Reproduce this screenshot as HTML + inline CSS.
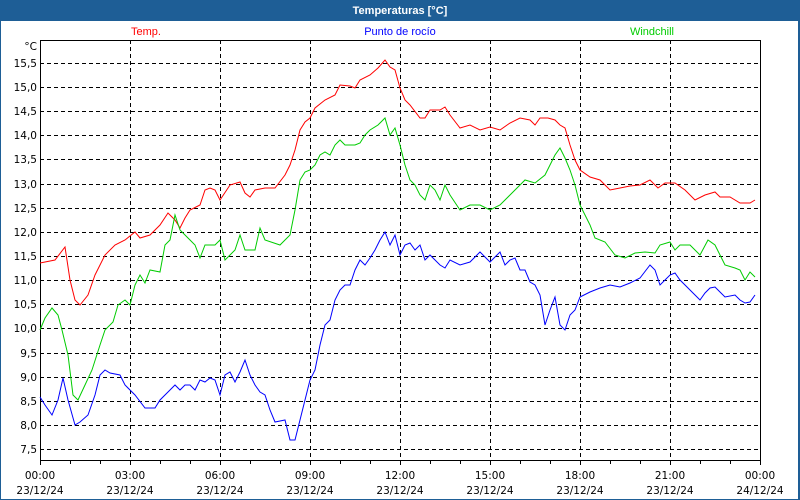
<!DOCTYPE html>
<html><head><meta charset="utf-8"><style>
html,body{margin:0;padding:0;width:800px;height:500px;overflow:hidden;background:#fff}
svg{display:block}
text{font-family:"Liberation Sans","DejaVu Sans",sans-serif;font-size:11px}
.ax{font-family:"DejaVu Sans","Liberation Sans",sans-serif;font-size:10.5px}
</style></head><body>
<svg width="800" height="500" viewBox="0 0 800 500" xmlns="http://www.w3.org/2000/svg">
<rect x="0" y="0" width="800" height="500" fill="#1e5e96"/>
<rect x="1" y="21" width="797" height="478" fill="#fff"/>
<text x="400" y="14" text-anchor="middle" fill="#fff" font-weight="bold" style="font-size:11px">Temperaturas [°C]</text>
<text x="146" y="35" text-anchor="middle" fill="#f00">Temp.</text>
<text x="400" y="35" text-anchor="middle" fill="#00f">Punto de rocío</text>
<text x="652" y="35" text-anchor="middle" fill="#0c0">Windchill</text>
<g stroke="#000" stroke-width="1" stroke-dasharray="4,3" fill="none">
<path d="M40 63.5H760M40 87.5H760M40 111.5H760M40 135.5H760M40 159.5H760M40 184.5H760M40 208.5H760M40 232.5H760M40 256.5H760M40 280.5H760M40 304.5H760M40 328.5H760M40 353.5H760M40 377.5H760M40 401.5H760M40 425.5H760M40 449.5H760"/>
<path d="M130.5 40V460M220.5 40V460M310.5 40V460M400.5 40V460M490.5 40V460M580.5 40V460M670.5 40V460"/>
</g>
<rect x="40.5" y="40.5" width="720" height="420" fill="none" stroke="#000"/>
<g stroke="#000"><path d="M40.5 460V465M70.5 460V464M100.5 460V464M130.5 460V465M160.5 460V464M190.5 460V464M220.5 460V465M250.5 460V464M280.5 460V464M310.5 460V465M340.5 460V464M370.5 460V464M400.5 460V465M430.5 460V464M460.5 460V464M490.5 460V465M520.5 460V464M550.5 460V464M580.5 460V465M610.5 460V464M640.5 460V464M670.5 460V465M700.5 460V464M730.5 460V464M760.5 460V465"/></g>
<g text-anchor="end" fill="#000" class="ax">
<text class="ax" x="37" y="50">°C</text>
<text class="ax" x="37" y="67">15,5</text><text class="ax" x="37" y="91">15,0</text><text class="ax" x="37" y="115">14,5</text><text class="ax" x="37" y="139">14,0</text><text class="ax" x="37" y="163">13,5</text><text class="ax" x="37" y="188">13,0</text><text class="ax" x="37" y="212">12,5</text><text class="ax" x="37" y="236">12,0</text><text class="ax" x="37" y="260">11,5</text><text class="ax" x="37" y="284">11,0</text><text class="ax" x="37" y="308">10,5</text><text class="ax" x="37" y="332">10,0</text><text class="ax" x="37" y="357">9,5</text><text class="ax" x="37" y="381">9,0</text><text class="ax" x="37" y="405">8,5</text><text class="ax" x="37" y="429">8,0</text><text class="ax" x="37" y="453">7,5</text>
</g>
<g text-anchor="middle" fill="#000">
<text class="ax" x="40" y="479">00:00</text><text class="ax" x="40" y="494">23/12/24</text>
<text class="ax" x="130" y="479">03:00</text><text class="ax" x="130" y="494">23/12/24</text>
<text class="ax" x="220" y="479">06:00</text><text class="ax" x="220" y="494">23/12/24</text>
<text class="ax" x="310" y="479">09:00</text><text class="ax" x="310" y="494">23/12/24</text>
<text class="ax" x="400" y="479">12:00</text><text class="ax" x="400" y="494">23/12/24</text>
<text class="ax" x="490" y="479">15:00</text><text class="ax" x="490" y="494">23/12/24</text>
<text class="ax" x="580" y="479">18:00</text><text class="ax" x="580" y="494">23/12/24</text>
<text class="ax" x="670" y="479">21:00</text><text class="ax" x="670" y="494">23/12/24</text>
<text class="ax" x="760" y="479">00:00</text><text class="ax" x="760" y="494">24/12/24</text>
</g>
<g fill="none" stroke-width="1">
<polyline stroke="#f00" points="40,263 55,260 65,247 70,280 75,300 80,305 88,295 95,275 105,255 115,245 125,240 135,232 140,238 150,235 160,225 168,213 175,220 180,228 185,218 190,210 200,205 205,190 210,188 215,190 220,200 230,185 240,182 245,193 250,197 255,190 265,188 275,188 285,175 290,165 295,150 300,130 305,122 310,118 315,108 325,100 335,95 340,85 350,86 355,88 360,80 370,75 378,68 385,60 390,67 395,70 400,88 405,100 410,105 420,118 425,118 430,110 440,110 445,107 450,115 460,128 470,125 480,130 490,127 500,130 510,123 520,118 530,120 535,125 540,118 548,118 555,120 560,125 565,128 570,145 575,160 580,170 590,177 600,180 610,190 620,188 630,186 640,185 650,180 658,188 665,183 675,183 685,190 695,200 705,195 715,192 720,197 730,197 740,203 750,203 755,200"/>
<polyline stroke="#0c0" points="40,330 45,318 52,308 58,315 62,330 68,355 73,395 78,400 85,385 92,370 100,345 105,330 113,322 118,305 125,300 130,305 135,285 140,275 145,283 150,270 160,272 165,245 170,240 175,215 180,230 190,240 195,245 200,258 205,245 215,245 220,240 225,260 230,255 235,250 240,235 245,250 255,250 260,228 265,240 280,245 290,235 295,210 300,180 305,172 310,170 315,165 320,155 325,152 330,155 335,145 340,140 345,145 355,145 360,143 365,135 370,130 378,125 385,118 390,135 395,128 400,145 405,165 410,180 415,185 420,195 425,200 430,185 435,190 440,200 445,185 450,195 460,210 470,205 480,205 490,210 500,205 510,195 520,185 525,180 535,183 545,175 550,165 555,155 560,148 565,158 570,170 575,185 580,205 590,225 595,238 605,242 615,255 625,258 635,253 645,252 655,253 660,245 670,242 675,250 680,245 690,245 700,255 708,240 715,245 720,255 725,265 735,268 740,270 745,280 750,272 755,277"/>
<polyline stroke="#00f" points="40,397 45,405 52,415 58,400 63,378 68,400 75,425 80,422 88,415 95,395 100,375 105,370 110,373 120,375 125,385 135,395 145,408 155,408 160,400 170,390 175,385 180,390 185,385 190,385 195,390 200,380 205,382 210,378 215,380 220,395 225,375 230,372 235,382 240,372 245,360 250,375 255,385 260,392 265,395 270,410 275,422 285,420 290,440 295,440 300,420 305,400 310,380 315,370 320,345 325,325 330,320 335,300 340,290 345,285 350,285 355,270 360,260 365,265 370,258 375,250 380,240 385,232 390,245 395,235 400,255 405,245 410,243 415,250 420,245 425,260 430,255 440,265 445,268 450,260 460,265 470,262 480,252 490,262 500,252 505,265 510,260 515,258 520,270 525,270 530,282 535,285 540,295 545,325 550,310 555,297 560,325 565,330 570,315 575,310 580,297 590,292 600,288 610,285 620,287 630,283 640,278 650,265 655,270 660,285 665,280 670,275 675,273 680,280 690,290 700,300 705,293 710,288 715,287 720,292 725,297 735,295 740,300 745,303 750,302 755,295"/>
</g>
</svg>
</body></html>
